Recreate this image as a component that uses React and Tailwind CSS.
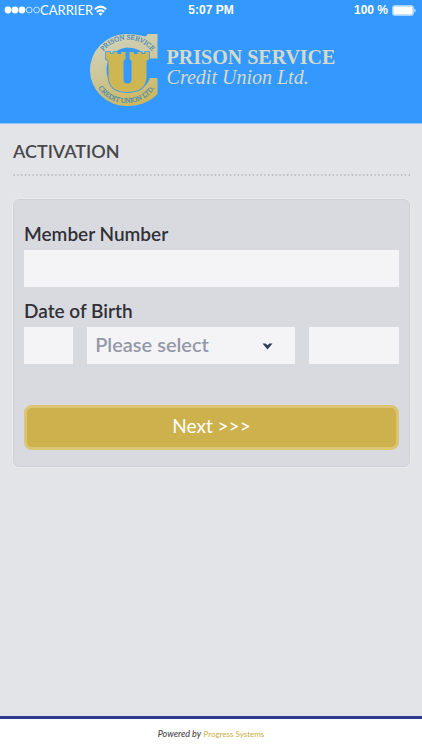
function StatusBar() {
  return (
    <div className="grid h-5 grid-cols-3 items-center px-1 text-white">
      <div className="flex items-center">
        <svg width="36" height="8" viewBox="0 0 36 8" aria-hidden="true">
          <g fill="#fff">
            <circle cx="4" cy="4" r="3.4" />
            <circle cx="11" cy="4" r="3.4" />
            <circle cx="18" cy="4" r="3.4" />
          </g>
          <g fill="none" stroke="#fff" strokeWidth="0.7">
            <circle cx="25.2" cy="4" r="2.9" />
            <circle cx="32.6" cy="4" r="2.9" />
          </g>
        </svg>
        <span className="text-[13px] leading-5">CARRIER</span>
        <svg className="ml-px shrink-0" width="13" height="11" viewBox="0 0 13 11" aria-hidden="true">
          <g fill="none" stroke="#fff" strokeWidth="2.1">
            <path d="M0.8 4.2 Q6.5 -0.9 12.2 4.2" />
            <path d="M2.9 6.9 Q6.5 3.7 10.1 6.9" />
          </g>
          <path d="M4.5 8.6 Q6.5 7 8.5 8.6 L6.5 10.8 Z" fill="#fff" />
        </svg>
      </div>
      <div className="text-center font-['Liberation_Sans',Arial,sans-serif] text-xs font-bold">5:07 PM</div>
      <div className="flex items-center justify-end gap-1 font-['Liberation_Sans',Arial,sans-serif] text-xs font-bold">
        <span>100 %</span>
        <svg width="26" height="11" viewBox="0 0 26 11" aria-hidden="true">
          <rect x="0.5" y="0.5" width="21" height="10" rx="2" fill="#8fc5ff" stroke="#b9dbff" strokeWidth="0.8" />
          <rect x="1.5" y="1.5" width="19" height="8" rx="1" fill="#fff" />
          <path d="M22.4 3.4 q1.3 0.6 1.3 2.1 t-1.3 2.1 z" fill="#cfe6ff" />
        </svg>
      </div>
    </div>
  );
}

function Logo() {
  return (
    <svg width="70" height="74" viewBox="0 0 70 74" role="img" aria-label="Prison Service Credit Union Ltd.">
      <defs>
        <linearGradient id="ring" x1="0.3" y1="0" x2="0.6" y2="1">
          <stop offset="0" stopColor="#d3d3bd" />
          <stop offset="0.5" stopColor="#cdc699" />
          <stop offset="1" stopColor="#cdb75c" />
        </linearGradient>
        <path id="topArc" d="M8 32 A31 31 0 0 1 69 32" />
        <path id="bottomArc" d="M5 46 A34 34 0 0 0 70 46" />
      </defs>
      <path
        d="M68.5 1 V25.5 H60 A26.5 23.5 0 0 0 38 14.5 A22.5 22.5 0 1 0 61 45 H68.5 V61 Q57 73 38 73 A36.5 36 0 0 1 37 1 Q48 1 56 3.5 Q58 3.3 58.5 1 Z"
        fill="url(#ring)"
      />
      <g fontFamily="'Liberation Serif', serif" fontSize="7" fill="#4589b5" stroke="#4589b5" strokeWidth="0.2">
        <text>
          <textPath href="#topArc" startOffset="50%" textAnchor="middle">PRISON SERVICE</textPath>
        </text>
        <text>
          <textPath href="#bottomArc" startOffset="50%" textAnchor="middle">CREDIT UNION LTD.</textPath>
        </text>
      </g>
      <path
        d="M17 19 H21 V21 H24.5 V19 H28.5 V21 H32 V19 H36.5 V26 L34.5 28 V46 Q34.5 50.5 38.5 50.5 Q42.5 50.5 42.5 46 V28 L40.5 26 V19 H45 V21 H48.5 V19 H52.5 V21 H56 V19 H60 V26 L57.5 28 V43 Q57.5 59 38.5 59 Q19.5 59 19.5 43 V28 L17 26 Z"
        fill="#ceb752"
        stroke="#3399ff"
        strokeWidth="1.6"
        paintOrder="stroke"
      />
    </svg>
  );
}

const field = "h-[37px] w-full min-w-0 rounded-none bg-[#f4f4f7] px-2 text-xl leading-8 font-semibold text-[#9498a9] outline-none";
const label = "block h-7 text-[19px] leading-6 font-semibold text-[#303036]";

export default function App() {
  return (
    <div className="flex min-h-screen flex-col bg-[#e3e4e8] font-[Lato,sans-serif]">
      <header className="border-b border-[#8fc2f8] bg-[#3399ff]">
        <StatusBar />
        <div className="flex justify-center gap-2 pt-[13px] pb-4 pl-0.5">
          <Logo />
          <div className="pt-3 font-['Liberation_Serif',serif] text-[#d5dacb]">
            <div className="text-xl leading-6 font-bold">PRISON SERVICE</div>
            <div className="text-xl leading-4 italic">Credit Union Ltd.</div>
          </div>
        </div>
      </header>

      <main className="flex-1 pt-[11px] pr-3 pl-[13px]">
        <h1 className="text-lg leading-8 font-semibold text-[#48484b]">ACTIVATION</h1>
        <svg className="mt-1.5 block w-full" height="4" aria-hidden="true">
          <line x1="1" y1="2" x2="100%" y2="2" stroke="#aeb0b7" strokeWidth="1.6" strokeLinecap="round" strokeDasharray="0.2 3.6" />
        </svg>
        <form
          className="mt-[22px] rounded-md border border-[#cfd0d8] bg-[#d9dae0] px-2.5 pt-[22px] pb-4 outline-1 outline-[#e9eaed]"
          onSubmit={(e) => e.preventDefault()}
        >
          <label htmlFor="member" className={label}>Member Number</label>
          <input id="member" type="text" className={field} />
          <fieldset className="mt-3">
            <legend className={label}>Date of Birth</legend>
            <div className="grid grid-cols-[49fr_207fr_90fr] gap-3.5">
              <input aria-label="Day" type="text" className={field} />
              <div className="relative">
                <select aria-label="Month" className={field + " appearance-none pb-1"} defaultValue="">
                  <option value="">Please select</option>
                </select>
                <svg className="pointer-events-none absolute top-4 right-[22px]" width="11" height="7" viewBox="0 0 11 7" aria-hidden="true">
                  <path d="M0.5 0.5 H3.5 L5.5 2.2 L7.5 0.5 H10.5 L5.5 6.5 Z" fill="#303d59" />
                </svg>
              </div>
              <input aria-label="Year" type="text" className={field} />
            </div>
          </fieldset>
          <button
            type="submit"
            className="mt-[41px] block h-[45px] w-full rounded-lg border-[3px] border-[#dbc573] bg-[#ccb14d] pb-0.5 text-[19px] text-white"
          >
            Next &gt;&gt;&gt;
          </button>
        </form>
      </main>

      <footer className="border-t-[3px] border-[#2c3a8c] bg-white pt-[7px] pb-2 text-center text-[9px] leading-4">
        <em className="font-medium text-[#48484b]">Powered by</em>{" "}
        <a href="#progress" className="text-[8px] text-[#c9ad45]">Progress Systems</a>
      </footer>
    </div>
  );
}
